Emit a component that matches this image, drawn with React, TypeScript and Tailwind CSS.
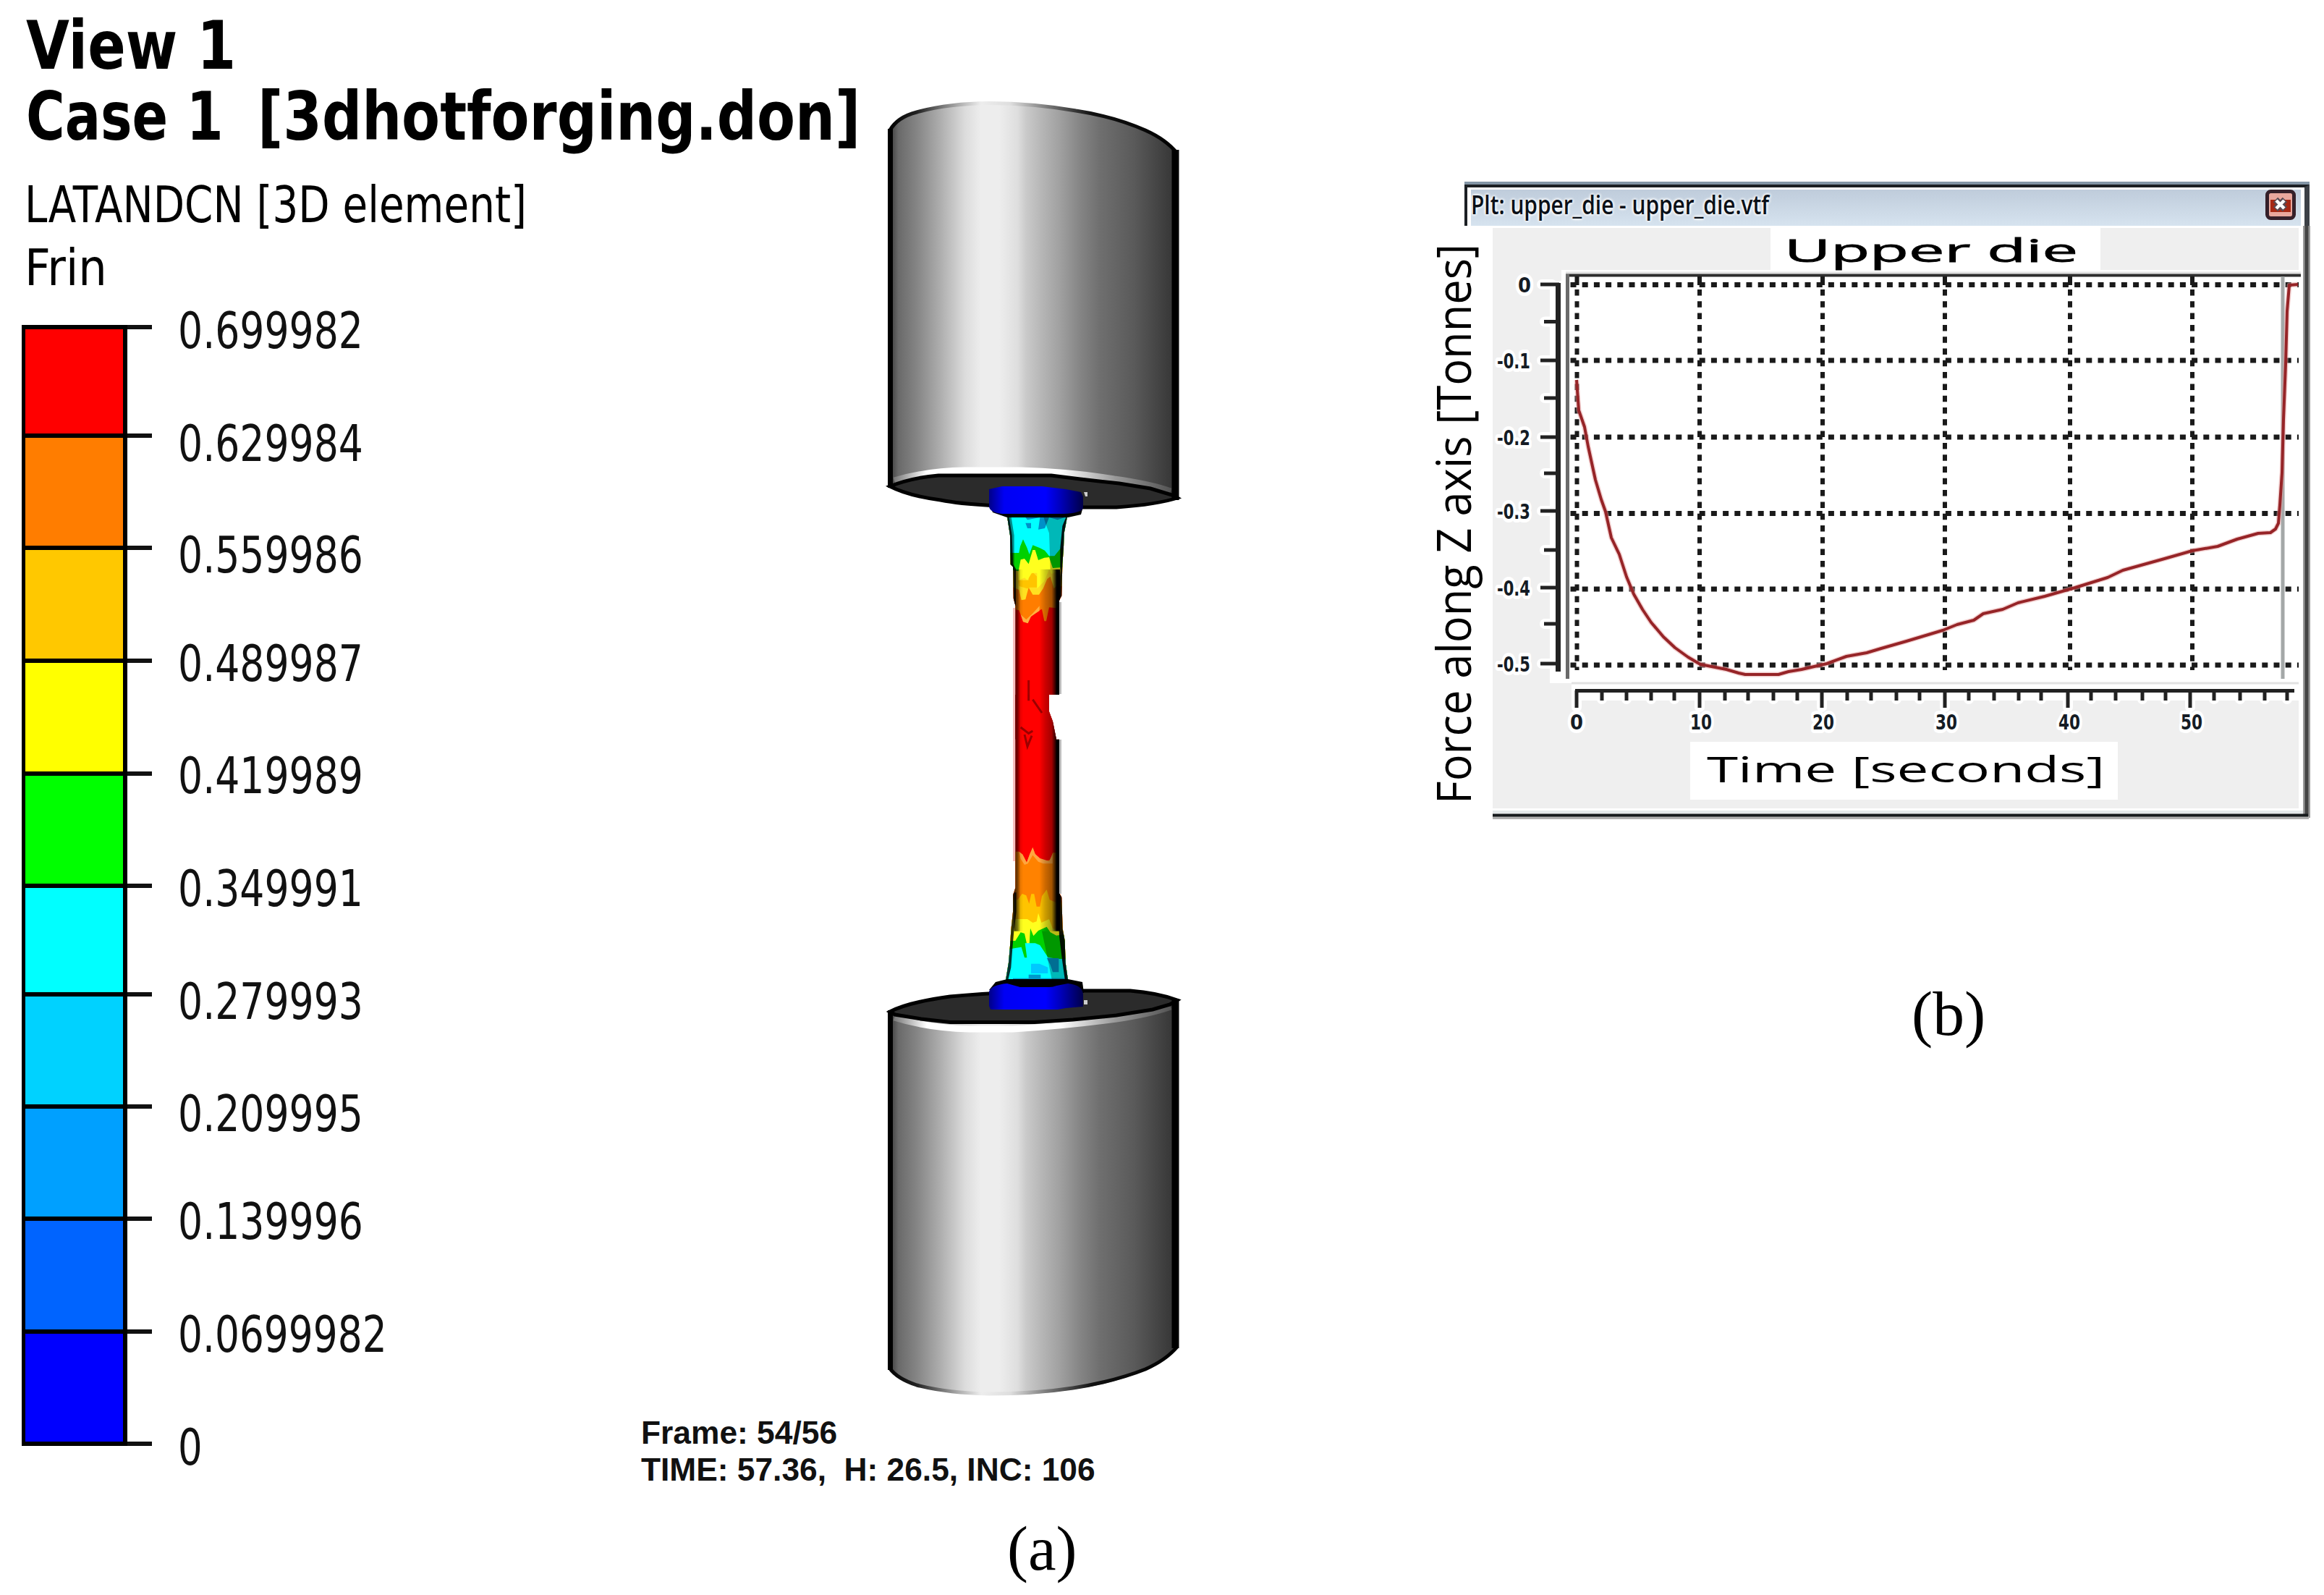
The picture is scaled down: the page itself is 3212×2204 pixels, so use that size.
import React, { useLayoutEffect, useRef, useState } from 'react';

interface FitTextProps {
    width: number;
    className?: string;
    children: string;
}

// Squeezes or stretches one line of text to an exact width
const FitText: React.FC<FitTextProps> = ({ width, className = '', children }) => {
    const ref = useRef<HTMLSpanElement>(null);
    const [scale, setScale] = useState(1);

    useLayoutEffect(() => {
        if (ref.current) {
            setScale(width / ref.current.offsetWidth);
        }
    }, [width, children]);

    return (
        <div className={`whitespace-pre ${className}`}>
            <span ref={ref} className="inline-block origin-left" style={{ transform: `scaleX(${scale})` }}>
                {children}
            </span>
        </div>
    );
};

const bands = [
    { color: '#ff0000', height: 150 },
    { color: '#ff7d00', height: 155 },
    { color: '#ffc800', height: 156 },
    { color: '#ffff00', height: 156 },
    { color: '#00ff00', height: 155 },
    { color: '#00ffff', height: 150 },
    { color: '#00d2ff', height: 155 },
    { color: '#00a0ff', height: 155 },
    { color: '#0064ff', height: 156 },
    { color: '#0000ff', height: 155 },
];

const bandLabels = [
    { text: '0.699982', height: 156, width: 256 },
    { text: '0.629984', height: 154, width: 256 },
    { text: '0.559986', height: 150, width: 256 },
    { text: '0.489987', height: 155, width: 256 },
    { text: '0.419989', height: 156, width: 256 },
    { text: '0.349991', height: 156, width: 256 },
    { text: '0.279993', height: 155, width: 256 },
    { text: '0.209995', height: 149, width: 256 },
    { text: '0.139996', height: 156, width: 256 },
    { text: '0.0699982', height: 156, width: 289 },
    { text: '0', height: 70, width: 34 },
];

const Legend: React.FC = () => (
    <div className="flex pl-[30px]">
        <div className="w-[146px] h-[1549px] border-l-[5px] border-r-[6px] border-b-[6px] border-black">
            {bands.map(b => (
                <div key={b.color} className="border-t-[6px] border-black" style={{ height: b.height, backgroundColor: b.color }} />
            ))}
        </div>
        <div className="w-[34px]">
            {bands.map(b => (
                <div key={b.color} className="border-t-[6px] border-[#111]" style={{ height: b.height }} />
            ))}
            <div className="border-t-[6px] border-[#111]" />
        </div>
        <div className="-mt-[27px] ml-[36px] text-[70px] leading-[70px] text-[#111]">
            {bandLabels.map(l => (
                <div key={l.text} style={{ height: l.height }}>
                    <FitText width={l.width}>{l.text}</FitText>
                </div>
            ))}
        </div>
    </div>
);

const Specimen: React.FC = () => (
    <svg className="block ml-[340px]" width="440" height="1810" viewBox="1210 130 440 1810">
        <defs>
            <linearGradient id="steel" gradientUnits="userSpaceOnUse" x1="1230" y1="0" x2="1622" y2="0">
                <stop offset="0" stopColor="#3c3c3c" />
                <stop offset="0.03" stopColor="#6a6a6a" />
                <stop offset="0.095" stopColor="#858585" />
                <stop offset="0.18" stopColor="#afafaf" />
                <stop offset="0.265" stopColor="#dcdcdc" />
                <stop offset="0.32" stopColor="#ededed" />
                <stop offset="0.385" stopColor="#ededed" />
                <stop offset="0.45" stopColor="#dedede" />
                <stop offset="0.48" stopColor="#cacaca" />
                <stop offset="0.54" stopColor="#b4b4b4" />
                <stop offset="0.6" stopColor="#a0a0a0" />
                <stop offset="0.67" stopColor="#858585" />
                <stop offset="0.74" stopColor="#6f6f6f" />
                <stop offset="0.86" stopColor="#5a5a5a" />
                <stop offset="0.93" stopColor="#484848" />
                <stop offset="1" stopColor="#363636" />
            </linearGradient>
            <linearGradient id="outline" gradientUnits="userSpaceOnUse" x1="1227" y1="0" x2="1630" y2="0">
                <stop offset="0" stopColor="#000" />
                <stop offset="0.1" stopColor="#222" />
                <stop offset="0.24" stopColor="#aaa" />
                <stop offset="0.32" stopColor="#ededed" />
                <stop offset="0.42" stopColor="#dedede" />
                <stop offset="0.55" stopColor="#777" />
                <stop offset="0.7" stopColor="#111" />
                <stop offset="1" stopColor="#000" />
            </linearGradient>
            <linearGradient id="rim" gradientUnits="userSpaceOnUse" x1="1235" y1="0" x2="1618" y2="0">
                <stop offset="0" stopColor="#777" />
                <stop offset="0.12" stopColor="#fff" />
                <stop offset="0.6" stopColor="#fff" />
                <stop offset="0.8" stopColor="#999" />
                <stop offset="1" stopColor="#555" />
            </linearGradient>
            <linearGradient id="blue" x1="0" x2="1" y1="0" y2="0">
                <stop offset="0" stopColor="#000088" />
                <stop offset="0.16" stopColor="#0000f4" />
                <stop offset="0.6" stopColor="#0000ff" />
                <stop offset="0.75" stopColor="#0000c0" />
                <stop offset="1" stopColor="#000048" />
            </linearGradient>
            <linearGradient id="shade" gradientUnits="userSpaceOnUse" x1="185" y1="0" x2="375" y2="0">
                <stop offset="0" stopColor="#000" stopOpacity="0.75" />
                <stop offset="0.08" stopColor="#000" stopOpacity="0.5" />
                <stop offset="0.14" stopColor="#000" stopOpacity="0.08" />
                <stop offset="0.2" stopColor="#000" stopOpacity="0" />
                <stop offset="0.55" stopColor="#000" stopOpacity="0" />
                <stop offset="0.68" stopColor="#000" stopOpacity="0.2" />
                <stop offset="0.82" stopColor="#000" stopOpacity="0.36" />
                <stop offset="0.89" stopColor="#000" stopOpacity="0.75" />
                <stop offset="0.93" stopColor="#000" stopOpacity="1" />
                <stop offset="1" stopColor="#000" stopOpacity="1" />
            </linearGradient>
            <clipPath id="upperHalf">
                <path d="M155 205H408L400 250L392 290L390 350L385 420L382 550L372 570V960H330V1030L345 1070L360 1145H190V590L182 560L180 430L170 420L168 300L158 235Z" />
            </clipPath>
            <clipPath id="lowerHalf">
                <path d="M190 0H330V70L345 110L360 185H372V820L382 840L386 970L395 1020L398 1110L410 1195H148L162 1110L168 1040L172 975L180 900V830L190 800Z" />
            </clipPath>
        </defs>

        {/* upper die */}
        <path fill="url(#steel)" d="M1230 180Q1240 162 1267 155Q1310 143 1367 141Q1430 141 1487 152Q1540 160 1583 179Q1612 192 1627 210V690L1230 670Z" />
        <path fill="none" stroke="url(#outline)" strokeWidth="5" d="M1230 180Q1240 162 1267 155Q1310 143 1367 142.500Q1430 143 1487 153Q1540 161 1583 180Q1612 193 1627 212" />
        <path fill="none" stroke="url(#rim)" strokeWidth="9" d="M1236 664Q1280 651 1333 650H1410Q1480 652 1540 662Q1590 669 1618 679" />
        <path fill="#2b2b2b" stroke="#000" strokeWidth="5" d="M1230 672Q1260 660 1297 657H1453L1493 662L1547 668L1590 675L1620 684L1627 688Q1600 697 1543 701H1480Q1350 701 1300 691Q1255 685 1230 672Z" />
        <path stroke="#000" strokeWidth="7" d="M1230.500 178V674" />
        <path stroke="#000" strokeWidth="10" d="M1624.500 207V691" />

        {/* lower die */}
        <path fill="url(#steel)" d="M1230 1398L1627 1382V1862Q1612 1880 1583 1893Q1540 1912 1483 1920Q1430 1928 1367 1928Q1310 1927 1267 1915Q1240 1906 1230 1892Z" />
        <path fill="none" stroke="url(#outline)" strokeWidth="5" d="M1230 1891Q1240 1905 1267 1914Q1310 1925 1367 1926Q1430 1926 1483 1918Q1540 1909 1583 1892Q1612 1879 1627 1861" />
        <path fill="none" stroke="url(#rim)" strokeWidth="9" d="M1236 1406Q1280 1420 1340 1422H1400Q1480 1417 1543 1408Q1590 1401 1618 1391" />
        <path fill="#2b2b2b" stroke="#000" strokeWidth="5" d="M1230 1398Q1255 1385 1313 1377Q1400 1369 1500 1369H1562Q1600 1372 1627 1382L1617 1388L1593 1395L1543 1403L1483 1409L1430 1412.500H1313L1273 1408L1237 1402Z" />
        <path stroke="#000" strokeWidth="7" d="M1230.500 1396V1893" />
        <path stroke="#000" strokeWidth="10" d="M1624.500 1380V1863" />

        {/* test bar, upper half */}
        <g transform="translate(1340 640) scale(0.33333)">
            <g clipPath="url(#upperHalf)">
                <rect x="150" y="200" width="270" height="960" fill="#ff0000" />
                <path fill="#ff7d00" d="M150 200H410V600H355L330 598L318 655L310 655L300 605L290 610L250 640L240 663L222 655L205 610L150 600Z" />
                <path fill="#ffb040" d="M212 628L235 648L260 625L290 592V612L255 635L242 664L222 658Z" />
                <path fill="#ffe020" d="M150 200H410V510H360L350 520L335 470L322 480L305 520L288 545L262 545L245 515L232 565L215 568L205 525L150 500Z" />
                <path fill="#ffc400" d="M200 485H245V460L265 455L280 470V515H250L240 520L205 510Z" />
                <path fill="#ffff1e" d="M150 200H410V450H360L340 460L330 440L310 490L280 520V455H258L240 485L228 475L205 485L200 455Z" />
                <path fill="#00d000" d="M150 200H410V430L345 435L330 390L310 392L285 402L272 360H262L245 418L228 396L212 400L203 448L150 440Z" />
                <path fill="#00ffff" d="M150 200H410V348L380 350L352 385H330L312 362L292 352L262 340L248 378L238 350L222 316L210 345L205 372H150Z" />
                <path fill="#0090c8" d="M215 205H395V225L365 235L330 225L312 270L285 275L292 225L240 235ZM232 248H255V270H240Z" />
                <rect x="150" y="200" width="260" height="20" fill="#0088b8" opacity="0.7" />
                <path fill="none" stroke="#8a0000" strokeWidth="9" opacity="0.8" d="M245 900V985L285 1005L325 1060M215 1090L250 1120" />
                <path fill="url(#shade)" d="M185 440H375V1160H185Z" />
                <path fill="#000" opacity="0.28" d="M300 200H400V440H335L330 290L315 250Z" />
                <path fill="#000" opacity="0.45" d="M150 200L170 205L185 300V440H150Z" />
                <path fill="#000" opacity="0.9" d="M410 200L385 260L376 350V440L372 560H400L410 300Z" />
                <path fill="none" stroke="#000" strokeWidth="16" opacity="0.8" d="M156 225L168 300L172 420L184 440V590" />
            </g>
        </g>

        {/* test bar, lower half */}
        <g transform="translate(1340 960) scale(0.33333)">
            <g clipPath="url(#lowerHalf)">
                <rect x="140" y="0" width="280" height="1200" fill="#ff0000" />
                <path fill="#ff8200" d="M140 650H205L220 662L237 695L250 660L262 635L272 660L285 680L315 688L335 685L345 655H420V1200H140Z" />
                <path fill="#ffa640" d="M205 650L220 662L237 695L250 660L262 632L272 660L292 678L330 690L345 658V700H305L285 692L262 665L242 700L228 705L212 680Z" />
                <path fill="#ffc400" d="M140 850H200L218 825L235 832L247 866L256 826H268L278 878H292L300 835L320 808L332 850L360 862H420V1200H140Z" />
                <path fill="#ffff1e" d="M140 935L200 930H240L262 945L278 940L285 905L298 945L330 930L345 970L420 980V1200H140Z" />
                <path fill="#00d200" d="M140 1020H190L212 985L228 990L238 1035H248L252 968L265 1000L285 978L320 962L335 985L360 998L420 990V1200H140Z" />
                <path fill="#00ffff" d="M140 1060L190 1050L215 1046L228 1090H238L230 1030H272L292 1038L325 1088L365 1095H420V1200H140Z" />
                <path fill="#00c8ff" d="M255 1115H290L325 1130V1155H255Z" />
                <path fill="#0099cc" d="M320 1092H370V1150H345L335 1120ZM180 1175H400V1200H180ZM245 1160H295V1175H245Z" />
                <path fill="none" stroke="#8a0000" strokeWidth="9" opacity="0.85" d="M245 0V25M262 20L300 75M212 135L245 160L262 150M228 165L240 215L258 170" />
                <path fill="url(#shade)" d="M185 -10H375V980H185Z" />
                <path fill="#000" opacity="0.28" d="M300 980H400V1200H345L325 1100Z" />
                <path fill="#000" opacity="0.9" d="M366 830L372 1000L384 1100L398 1200H420V830Z" />
                <path fill="none" stroke="#000" strokeWidth="16" opacity="0.8" d="M186 820V900L176 980L170 1050L164 1130L150 1190" />
            </g>
        </g>

        {/* pale fringe along the bar */}
        <path stroke="#f8c0c0" strokeWidth="3" d="M1401.500 840V1190" />
        <path stroke="#bbb" strokeWidth="3" d="M1465.500 832V959M1465.500 1022V1235" />

        {/* flanges */}
        <path fill="#000" d="M1368 698L1372 708L1392 715H1476L1494 711L1497 700Z" />
        <path fill="url(#blue)" d="M1367 676L1385 672H1440L1473 676L1494 680L1497 686V702Q1494 709 1470 710H1385Q1368 708 1367 700Z" />
        <path fill="#000" d="M1367 1368L1376 1357L1392 1353H1476L1496 1357L1498 1372Z" />
        <path fill="url(#blue)" d="M1367 1370Q1370 1361 1392 1359L1410 1364H1450L1476 1359Q1496 1361 1497 1374V1391L1473 1393L1462 1395H1369L1367 1390Z" />
        <path fill="#000" opacity="0.6" d="M1402 1358H1470L1455 1364H1410Z" />
        <path fill="#ccc" d="M1498 680H1503V686H1500ZM1498 1382H1503V1388H1498Z" />
    </svg>
);

const gridX = [2179.5, 2349, 2519, 2688, 2861, 3030];
const gridY = [393.5, 498, 604, 709.5, 814, 919];

const yTicks = [
    { y: 393, label: '0' },
    { y: 498, label: '-0.1' },
    { y: 604, label: '-0.2' },
    { y: 706, label: '-0.3' },
    { y: 812, label: '-0.4' },
    { y: 917, label: '-0.5' },
];
const yMinor = [444.5, 550, 654, 760, 862];

const xTicks = [
    { x: 2179, label: '0' },
    { x: 2349, label: '10' },
    { x: 2518, label: '20' },
    { x: 2688, label: '30' },
    { x: 2858, label: '40' },
    { x: 3027, label: '50' },
];
const xMinor = [
    2214, 2248, 2282, 2314, 2384, 2416, 2451, 2484, 2553, 2586, 2621, 2653,
    2721, 2756, 2790, 2821, 2890, 2924, 2961, 2993, 3060, 3096, 3130, 3161,
];

const forceCurve =
    '2179,525 2182,567 2190,590 2195,617 2205,663 2213,690 2219,707 2227,743 2238,766 2248,797 2258,821 2270,842 2282,860 2299,880 2315,895 2333,908 2350,918 2386,925 2403,930 2412,932 2458,932 2472,928 2490,925 2525,917 2552,907 2580,902 2600,896 2635,886 2685,871 2705,863 2728,857 2741,848 2768,842 2789,833 2826,824 2868,812 2913,798 2934,788 2988,773 3030,761 3065,755 3092,745 3121,737 3138,736 3145,731 3149,723 3151,698 3154,653 3156,580 3159,503 3161,430 3164,394 3176,393';

const ForceChart: React.FC = () => (
    <svg className="block" width="1252" height="830" viewBox="1960 312 1252 830">
        <rect x="2063" y="315" width="1114" height="802" fill="#efefef" />

        {/* canvas */}
        <path fill="#fff" d="M2158 373H3180V968H2172V944H2142V388H2158Z" />
        <path stroke="#e2e2e2" strokeWidth="3" d="M2164 377H3180M2172 944H3177" />
        <path stroke="#2e2e2e" strokeWidth="4" d="M2164 380.500H3180" />
        <path stroke="#6a6a6a" strokeWidth="5" d="M2166.500 379V938" />
        <path stroke="#a4a8a8" strokeWidth="5" d="M3155 382V938" />

        {gridY.map(y => (
            <line key={y} x1="2170" x2="3177" y1={y} y2={y} stroke="#1a1a1a" strokeWidth="7" strokeDasharray="8 8.200" strokeDashoffset="-0.500" />
        ))}
        {gridX.map(x => (
            <g key={x} stroke="#1a1a1a" strokeWidth="6">
                <line x1={x} x2={x} y1="382" y2="394" />
                <line x1={x} x2={x} y1="400" y2="926" strokeDasharray="8.500 7.800" />
            </g>
        ))}

        <polyline points={forceCurve} fill="none" stroke="#e6a0a0" strokeWidth="7" strokeLinejoin="round" opacity="0.5" />
        <polyline points={forceCurve} fill="none" stroke="#962427" strokeWidth="4" strokeLinejoin="round" />

        {/* axes, white casing first */}
        <g stroke="#fff" strokeWidth="14" strokeLinecap="round">
            {yTicks.map(t => <line key={t.y} x1="2131" x2="2145" y1={t.y} y2={t.y} />)}
            {yMinor.map(y => <line key={y} x1="2135" x2="2145" y1={y} y2={y} />)}
            {xTicks.map(t => <line key={t.x} x1={t.x} x2={t.x} y1="964" y2="977" />)}
            {xMinor.map(x => <line key={x} x1={x} x2={x} y1="964" y2="966" />)}
        </g>
        <g stroke="#222" fill="none">
            <path strokeWidth="7" d="M2153.500 391V928" />
            <path strokeWidth="5" d="M2177 954.500H3171" />
            {yTicks.map(t => <line key={t.y} x1="2129" x2="2155" y1={t.y} y2={t.y} strokeWidth="5" />)}
            {yMinor.map(y => <line key={y} x1="2134" x2="2153" y1={y} y2={y} strokeWidth="5" />)}
            {xTicks.map(t => <line key={t.x} x1={t.x} x2={t.x} y1="954" y2="978" strokeWidth="5" />)}
            {xMinor.map(x => <line key={x} x1={x} x2={x} y1="954" y2="968" strokeWidth="5" />)}
        </g>

        <g
            className="[font-family:'DejaVu_Sans',sans-serif] font-bold text-[29px]"
            fill="#151c24"
            stroke="#fff"
            strokeWidth="10"
            strokeLinejoin="round"
            paintOrder="stroke"
        >
            {yTicks.map(t => (
                <text
                    key={t.label}
                    x={t.label === '0' ? 2098 : 2069}
                    y={t.y + 11}
                    textLength={t.label === '0' ? 18 : 46}
                    lengthAdjust="spacingAndGlyphs"
                >
                    {t.label}
                </text>
            ))}
            {xTicks.map(t => (
                <text
                    key={t.label}
                    x={t.label === '0' ? 2170 : t.x - 13}
                    y="1008"
                    textLength={t.label === '0' ? 18 : 30}
                    lengthAdjust="spacingAndGlyphs"
                >
                    {t.label}
                </text>
            ))}
        </g>

        {/* titles */}
        <rect x="2447" y="313" width="456" height="62" fill="#fff" />
        <rect x="2336" y="1025" width="591" height="80" fill="#fff" />
        <g className="[font-family:'Open_Sans',sans-serif]" fill="#000">
            <text className="text-[43px]" x="2466" y="362" textLength="406" lengthAdjust="spacingAndGlyphs" stroke="#000" strokeWidth="0.8">
                Upper die
            </text>
            <text className="text-[50px]" x="2359" y="1081" textLength="550" lengthAdjust="spacingAndGlyphs">
                Time [seconds]
            </text>
            <text
                className="text-[65px]"
                transform="translate(2033 1111) rotate(-90)"
                textLength="774"
                lengthAdjust="spacingAndGlyphs"
            >
                Force along Z axis [Tonnes]
            </text>
        </g>

        {/* window frame */}
        <path stroke="#999" strokeWidth="10" d="M3188 312V1130" />
        <path stroke="#444" strokeWidth="5" d="M3188 312V1128" />
        <path stroke="#e4e9ea" strokeWidth="4" d="M2063 1122H3183" />
        <path stroke="#b0b0b0" strokeWidth="4" d="M2063 1130H3191" />
        <path stroke="#161a1c" strokeWidth="4" d="M2063 1126.500H3190" />
    </svg>
);

const CloseIcon: React.FC = () => (
    <svg width="42" height="42" viewBox="0 0 42 42">
        <rect x="2.500" y="2.500" width="37" height="37" rx="5" fill="#e9a79d" stroke="#35202a" strokeWidth="5" />
        <rect x="7" y="14" width="28" height="17" fill="#a62814" />
        <path stroke="#5a4a52" strokeWidth="9" d="M14 14L27 27M27 14L14 27" />
        <path stroke="#fff" strokeWidth="4.500" d="M15 15L26 26M26 15L15 26" />
    </svg>
);

const PlotWindow: React.FC = () => (
    <div className="pt-[251px]">
        <div className="ml-[64px] mr-[20px] h-[61px] border-t-4 border-[#8395a5]">
            <div className="h-[57px] border-t-4 border-l-4 border-r-[7px] border-t-[#1c2024] border-l-[#1c2024] border-r-[#3c4046] pt-[3px] pl-[5px] pr-[5px]">
                <div className="flex h-[50px] justify-between bg-linear-to-b from-[#bfccdb] to-[#d6e3ef]">
                    <FitText
                        width={412}
                        className="[font-family:'Open_Sans',sans-serif] font-semibold text-[36px] leading-[42px] text-[#0a1018] [text-shadow:0_0_5px_#fff,0_0_5px_#fff,0_0_5px_#fff]"
                    >
                        Plt: upper_die - upper_die.vtf
                    </FitText>
                    <div className="mr-[7px]">
                        <CloseIcon />
                    </div>
                </div>
            </div>
        </div>
        <ForceChart />
    </div>
);

const App: React.FC = () => {
    return (
        <div className="flex w-[3212px] h-[2204px] overflow-hidden bg-white text-black [font-family:'DejaVu_Sans',sans-serif]">
            <section className="flex w-[1960px] shrink-0">
                <div className="w-[870px] shrink-0">
                    <header className="h-[449px] pt-[14px]">
                        <div className="pl-[36px] text-[93px] leading-[98px] font-bold">
                            <FitText width={290}>View 1</FitText>
                            <div className="flex w-[1200px]">
                                <FitText width={273} className="w-[320px] shrink-0">Case 1</FitText>
                                <FitText width={833}>[3dhotforging.don]</FitText>
                            </div>
                        </div>
                        <div className="mt-[30px] pl-[34px] text-[70px] leading-[87px]">
                            <FitText width={694}>LATANDCN [3D element]</FitText>
                            <FitText width={114}>Frin</FitText>
                        </div>
                    </header>
                    <Legend />
                </div>
                <div className="w-[1090px] shrink-0 pt-[130px]">
                    <Specimen />
                    <div className="mt-[14px] ml-[16px] [font-family:'Liberation_Sans',sans-serif] font-bold text-[44px] leading-[51px] text-[#111]">
                        <FitText width={271}>Frame: 54/56</FitText>
                        <FitText width={628}>TIME: 57.36,  H: 26.5, INC: 106</FitText>
                    </div>
                    <FitText width={96} className="mt-[41px] ml-[522px] [font-family:'Liberation_Serif',serif] text-[86px] leading-[86px]">
                        (a)
                    </FitText>
                </div>
            </section>
            <section className="w-[1252px] shrink-0">
                <PlotWindow />
                <FitText width={102} className="mt-[216px] ml-[682px] [font-family:'Liberation_Serif',serif] text-[86px] leading-[86px]">
                    (b)
                </FitText>
            </section>
        </div>
    );
};

export default App;
